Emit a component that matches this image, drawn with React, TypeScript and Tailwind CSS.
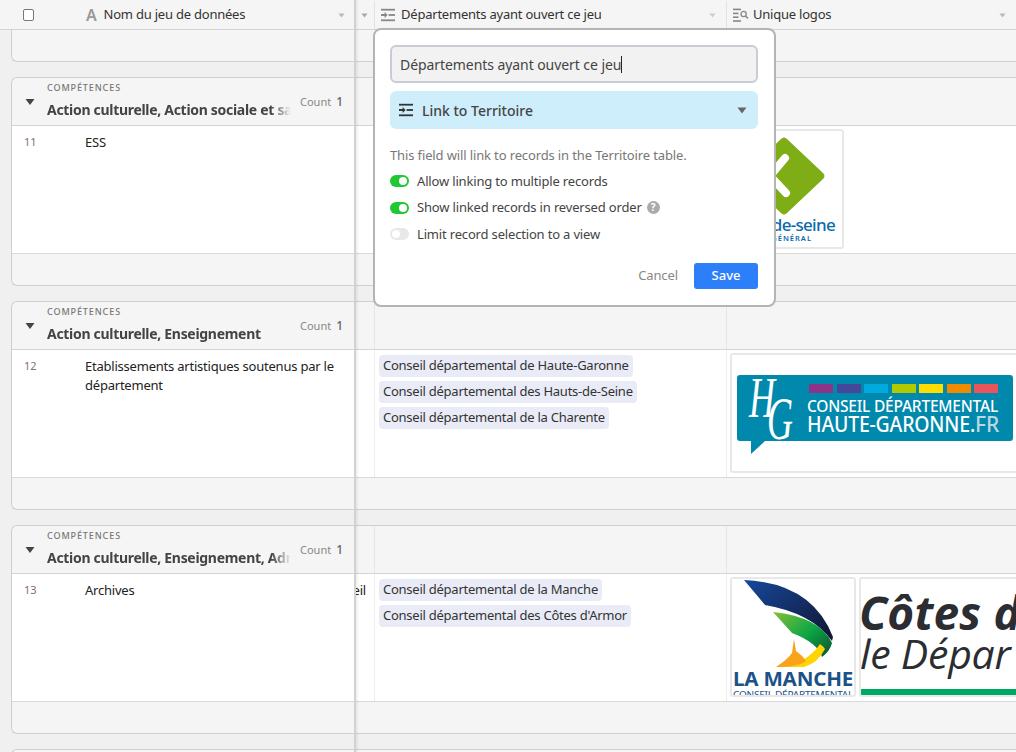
const font = "font-['Noto_Sans',sans-serif]"

const LinkIcon = ({className = ""}: {className?: string}) => (
  <svg viewBox="0 0 16 14" className={className} fill="currentColor">
    <rect x="1" y="0.8" width="14" height="1.8" />
    <rect x="8.6" y="6.1" width="6.4" height="1.8" />
    <path d="M1 6.1h3.6V3.9L7.6 7 4.6 10.1V7.9H1z" />
    <rect x="1" y="11.4" width="14" height="1.8" />
  </svg>
)

const LookupIcon = () => (
  <svg viewBox="0 0 16 14" className="h-[14px] w-[16px] text-[#888]" fill="currentColor">
    <rect x="0" y="0.6" width="8" height="1.6" />
    <rect x="0" y="4.6" width="5.5" height="1.6" />
    <rect x="0" y="8.4" width="5.5" height="1.6" />
    <rect x="0" y="12.2" width="8" height="1.6" />
    <circle cx="10.6" cy="6" r="2.6" fill="none" stroke="currentColor" strokeWidth="1.3" />
    <path d="M12.4 8l2.6 2.4" stroke="currentColor" strokeWidth="1.5" />
  </svg>
)

const Caret = ({className}: {className: string}) => (
  <svg viewBox="0 0 10 7" className={className} fill="currentColor">
    <path d="M0.5 0.5h9L5 6.5z" />
  </svg>
)

const HeaderRow = () => (
  <div className="flex h-[30px] shrink-0 border-b border-[#d4d4d4] bg-[#f5f5f5] pt-px text-[13px] tracking-[-0.22px] text-[#333]">
    <div className="flex w-[355px] shrink-0 items-center">
      <span className="ml-[23px] h-[12px] w-[11px] rounded-[2px] border border-[#777] bg-white" />
      <span className="ml-[52px] text-[16px] leading-none font-semibold text-[#999]">A</span>
      <span className="ml-[7px]">Nom du jeu de données</span>
      <Caret className="mr-[10px] ml-auto h-[5px] w-[7px] text-[#bbb]" />
    </div>
    <div className="flex w-[20px] shrink-0 items-center justify-center border-r border-[#e2e2e2]">
      <Caret className="h-[5px] w-[7px] text-[#aaa]" />
    </div>
    <div className="flex w-[352px] shrink-0 items-center border-r border-[#e2e2e2] pl-[5px]">
      <LinkIcon className="h-[14px] w-[16px] text-[#888]" />
      <span className="ml-[5px]">Départements ayant ouvert ce jeu</span>
      <Caret className="mr-[10px] ml-auto h-[5px] w-[7px] text-[#ccc]" />
    </div>
    <div className="flex flex-1 items-center pl-[6px]">
      <LookupIcon />
      <span className="ml-[4px]">Unique logos</span>
      <Caret className="mr-[10px] ml-auto h-[5px] w-[7px] text-[#bbb]" />
    </div>
  </div>
)

const Tag = ({label}: {label: string}) => (
  <span className="block h-[22px] w-fit rounded-[4px] bg-[#e9ebf7] px-[4px] text-[13px] leading-[21px] tracking-[-0.25px] whitespace-nowrap text-[#333]">
    {label}
  </span>
)

const HautsDeSeineLogo = () => (
  <div className="h-[120px] w-[114px] overflow-hidden rounded-[3px] border-2 border-[#e8e8e8] bg-white">
    <svg viewBox="0 0 110 116" className="h-full w-full">
      <path d="M49 8 Q52 5 55 8 L91 42 Q94 45 91 48 L55 82 Q52 85 49 82 L13 48 Q10 45 13 42 Z" fill="#7ead16" />
      <path d="M53 27 L38 45 L54 62" fill="none" stroke="#fff" strokeWidth="8" strokeLinecap="round" />
      <text x="103" y="100" textAnchor="end" fontSize="17" fontWeight="500" fill="#0a6cab" fontFamily="Noto Sans" letterSpacing="-0.7">s-de-seine</text>
      <text x="80" y="110" textAnchor="end" fontSize="7.5" fontWeight="600" fill="#0a6cab" fontFamily="Noto Sans" letterSpacing="1">GÉNÉRAL</text>
    </svg>
  </div>
)

const HauteGaronneLogo = () => (
  <div className="h-[120px] w-[286px] shrink-0 overflow-hidden rounded-l-[3px] border-2 border-r-0 border-[#e8e8e8] bg-white">
    <svg viewBox="0 0 284 116" className="h-[116px] w-[284px]">
      <path d="M8 20h270a3 3 0 0 1 3 3v60a3 3 0 0 1-3 3H33L19 99V86H8a3 3 0 0 1-3-3V23a3 3 0 0 1 3-3z" fill="#0089ac" />
      <text transform="translate(17 62) scale(0.9 1.45)" fontSize="40" fontStyle="italic" fontFamily="Liberation Serif" fill="#fff">H</text>
      <text transform="translate(35 84) scale(0.9 1.55)" fontSize="40" fontStyle="italic" fontFamily="Liberation Serif" fill="#fff">G</text>
      <rect x="77" y="29" width="24" height="9" fill="#8e3488" />
      <rect x="105" y="29" width="24" height="9" fill="#45479b" />
      <rect x="132" y="29" width="24" height="9" fill="#00a9de" />
      <rect x="160" y="29" width="24" height="9" fill="#b2c900" />
      <rect x="187" y="29" width="24" height="9" fill="#ffdd00" />
      <rect x="215" y="29" width="24" height="9" fill="#f08a00" />
      <rect x="242" y="29" width="24" height="9" fill="#e95558" />
      <text x="75" y="57" fontSize="15.5" fontWeight="500" fontFamily="Noto Sans" fill="#fff" textLength="191" lengthAdjust="spacingAndGlyphs">CONSEIL DÉPARTEMENTAL</text>
      <text x="75" y="77" fontSize="22" fontWeight="500" fontFamily="Noto Sans" fill="#fff" textLength="168" lengthAdjust="spacingAndGlyphs">HAUTE-GARONNE.</text>
      <text x="243" y="77" fontSize="22" fontWeight="500" fontFamily="Noto Sans" fill="#b9d8e2" textLength="24" lengthAdjust="spacingAndGlyphs">FR</text>
    </svg>
  </div>
)

const MancheLogo = () => (
  <div className="h-[120px] w-[126px] shrink-0 overflow-hidden rounded-[3px] border-2 border-[#e8e8e8] bg-white">
    <svg viewBox="0 0 122 116" className="h-full w-full">
      <defs>
        <linearGradient id="bleu" x1="0" x2="1" y1="0" y2="0.8">
          <stop offset="0" stopColor="#15499b" />
          <stop offset="1" stopColor="#12193a" />
        </linearGradient>
        <linearGradient id="vert" x1="0" x2="1" y1="0" y2="0.8">
          <stop offset="0" stopColor="#86bf37" />
          <stop offset="0.6" stopColor="#0aa645" />
          <stop offset="1" stopColor="#0e5e33" />
        </linearGradient>
      </defs>
      <path d="M12 1 Q80 4 101 58 L100 62 Q80 34 33 26 Z" fill="url(#bleu)" />
      <path d="M41 33 Q88 38 100 64 Q98 72 90 78 Q86 64 60 54 Z" fill="url(#vert)" />
      <path d="M88 65 Q92 68 93 70 Q86 84 72 88 L44 88 Q74 86 88 65z" fill="#ffd400" />
      <path d="M44 88 Q56 80 60 74 L62 60 L64 72 Q70 76 74 82 Q66 88 44 88z" fill="#f9a21a" />
      <text x="1" y="107" fontSize="19" fontWeight="700" fontFamily="Noto Sans" fill="#1c5288" textLength="120" lengthAdjust="spacingAndGlyphs">LA MANCHE</text>
      <text x="1" y="119" fontSize="9" fontFamily="Noto Sans" fill="#1c5288" textLength="120" lengthAdjust="spacingAndGlyphs">CONSEIL DÉPARTEMENTAL</text>
    </svg>
  </div>
)

const CotesLogo = () => (
  <div className="h-[120px] w-[160px] shrink-0 overflow-hidden rounded-l-[3px] border-2 border-r-0 border-[#e8e8e8] bg-white">
    <svg viewBox="0 0 158 116" className="h-[116px] w-[158px]">
      <text x="-2" y="51" fontSize="46" fontWeight="700" fontStyle="italic" fontFamily="Open Sans" fill="#2b2d33" letterSpacing="0.2">Côtes d</text>
      <text x="-1" y="90" fontSize="41" fontStyle="italic" fontFamily="Open Sans" fontWeight="500" fill="#2b2d33">le Dépar</text>
      <rect x="0" y="110" width="158" height="6" fill="#00a866" />
    </svg>
  </div>
)

const Group = ({title, name, row, tags, logos, bleed}: {
  title: string
  name?: string
  row: number
  tags?: string[]
  logos?: React.ReactNode
  bleed?: string
}) => (
  <div className="mb-[15px] flex h-[209px] shrink-0 flex-col overflow-hidden rounded-l-[6px] border-y border-l border-[#cfcfcf] bg-[#f5f5f5]">
    <div className="flex h-[48px] shrink-0 border-b border-[#d4d4d4]">
      <div className="flex w-[362px] shrink-0 items-center">
        <Caret className="ml-[13px] h-[8px] w-[10px] text-[#444]" />
        <div className="ml-[12px] w-[244px] self-start overflow-hidden pt-[4px]">
          <div className="text-[9px] leading-[12px] font-medium tracking-[0.9px] text-[#777]">COMPÉTENCES</div>
          <div className="mt-[6px] text-[14px] leading-[20px] font-bold tracking-[-0.3px] whitespace-nowrap text-[#444] [mask-image:linear-gradient(to_right,black_92%,transparent)]">{title}</div>
        </div>
        <span className="mt-px ml-[9px] text-[11px] text-[#888]">Count</span>
        <span className="mt-px ml-[5px] text-[12px] font-medium text-[#666]">1</span>
      </div>
      <div className="w-[352px] shrink-0 border-l border-[#e6e6e6]" />
      <div className="flex-1 border-l border-[#e6e6e6]" />
    </div>
    <div className="flex h-[128px] shrink-0 border-b border-[#d9d9d9] bg-white text-[13px] tracking-[-0.22px] text-[#222]">
      <div className="flex w-[342px] shrink-0">
        <span className="mt-[9px] ml-[12px] w-[61px] text-[11px] leading-[14px] tracking-normal text-[#8a6e6e]">{row}</span>
        <span className="mt-[7px] w-[260px] leading-[19px]">{name}</span>
      </div>
      <div className="flex w-[20px] shrink-0 justify-end overflow-hidden pt-[7px] pr-[8px] leading-[19px]">
        <span className="h-fit shrink-0 whitespace-nowrap">{bleed}</span>
      </div>
      <div className="flex w-[352px] shrink-0 flex-col gap-[4px] border-l border-[#eeeeee] pt-[5px] pl-[4px]">
        {tags?.map((tag) => <Tag key={tag} label={tag} />)}
      </div>
      <div className="flex min-w-0 flex-1 gap-[3px] border-l border-[#eeeeee] pt-[3px] pl-[3px]">{logos}</div>
    </div>
  </div>
)

const Toggle = ({on}: {on?: boolean}) => (
  <span className={on
    ? "flex h-[12px] w-[19px] shrink-0 items-center justify-end rounded-full bg-[#20c933] pr-[2px]"
    : "flex h-[12px] w-[19px] shrink-0 items-center rounded-full bg-[#e8e8e8] pl-[2px]"}>
    <span className="h-[8px] w-[8px] rounded-full bg-white" />
  </span>
)

const Option = ({label, on, help}: {label: string; on?: boolean; help?: boolean}) => (
  <div className="flex h-[26.5px] items-center text-[13px] tracking-[-0.17px] text-[#444]">
    <Toggle on={on} />
    <span className="ml-[8px]">{label}</span>
    {help && <span className="ml-[5px] flex h-[13px] w-[13px] items-center justify-center rounded-full bg-[#aaa] text-[10px] font-bold tracking-normal text-white">?</span>}
  </div>
)

const FieldPopover = () => (
  <div className="absolute top-[28px] left-[373px] h-[279px] w-[403px] rounded-[8px] border-2 border-[#b4b4b4] bg-white pt-[15px] pr-[16px] pl-[15px]">
    <div className="flex h-[38px] items-center rounded-[6px] border-2 border-[#c8ccd4] bg-[#f2f2f2] pl-[8px] text-[14px] tracking-[-0.07px] text-[#444]">
      Départements ayant ouvert ce jeu
      <span className="h-[17px] w-px bg-[#222]" />
    </div>
    <div className="mt-[8px] flex h-[38px] items-center rounded-[6px] bg-[#cfeefc] pr-[10px] pl-[8px] text-[14px] font-medium text-[#444]">
      <LinkIcon className="h-[14px] w-[16px] text-[#333]" />
      <span className="ml-[8px]">Link to Territoire</span>
      <Caret className="mr-[1px] ml-auto h-[7px] w-[10px] text-[#666]" />
    </div>
    <p className="mt-[17px] text-[13px] leading-[18px] tracking-[-0.13px] text-[#777]">This field will link to records in the Territoire table.</p>
    <div className="mt-[4px] flex flex-col">
      <Option label="Allow linking to multiple records" on />
      <Option label="Show linked records in reversed order" on help />
      <Option label="Limit record selection to a view" />
    </div>
    <div className="mt-[15px] flex items-center justify-end">
      <span className="mt-px text-[13px] tracking-[-0.1px] text-[#888]">Cancel</span>
      <button className="ml-[16px] h-[26px] w-[64px] rounded-[3px] bg-[#2d7ff9] text-[13px] font-medium text-white">Save</button>
    </div>
  </div>
)

export default function App() {
  return (
    <div className={`relative flex h-[752px] w-[1016px] flex-col overflow-hidden bg-[#f0f0f0] ${font}`}>
      <HeaderRow />
      <div className="flex flex-col pl-[11px]">
        <div className="mb-[15px] h-[32px] shrink-0 rounded-bl-[6px] border-b border-l border-[#cfcfcf] bg-[#f5f5f5]" />
        <Group
          title="Action culturelle, Action sociale et santé"
          name="ESS"
          row={11}
          logos={<HautsDeSeineLogo />}
        />
        <Group
          title="Action culturelle, Enseignement"
          name="Etablissements artistiques soutenus par le département"
          row={12}
          tags={["Conseil départemental de Haute-Garonne", "Conseil départemental des Hauts-de-Seine", "Conseil départemental de la Charente"]}
          logos={<HauteGaronneLogo />}
        />
        <Group
          title="Action culturelle, Enseignement, Administration"
          name="Archives"
          row={13}
          bleed="Conseil"
          tags={["Conseil départemental de la Manche", "Conseil départemental des Côtes d'Armor"]}
          logos={<><MancheLogo /><CotesLogo /></>}
        />
        <div className="h-[10px] shrink-0 rounded-tl-[6px] border-t border-l border-[#cfcfcf] bg-[#f5f5f5]" />
      </div>
      <div className="absolute top-0 bottom-0 left-[354px] w-[5px] border-l-2 border-[#d2d2d2] bg-gradient-to-r from-[#00000012] to-transparent" />
      <FieldPopover />
    </div>
  )
}
